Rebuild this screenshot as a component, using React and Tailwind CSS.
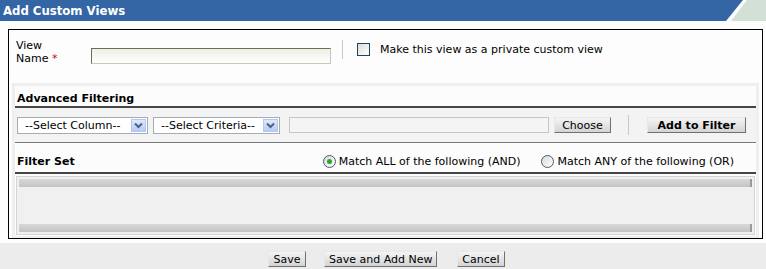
import React from 'react';

const font = { fontFamily: '"DejaVu Sans", Verdana, sans-serif' };

const Btn = ({ children, bold, className = '' }) => (
    <button
        type="button"
        className={`h-[16px] px-[4px] whitespace-nowrap text-[11px] leading-none text-black bg-gradient-to-b from-[#f4f4f4] to-[#d4d4d4] border border-t-[#e8e8e8] border-l-[#e8e8e8] border-r-[#707070] border-b-[#707070] ${bold ? 'font-bold' : ''} ${className}`}
    >
        {children}
    </button>
);

const Select = ({ label, width }) => (
    <div className={`flex items-center justify-between h-[17px] border border-[#a5acb2] bg-white pl-[7px] pr-[1px] ${width}`}>
        <span className="text-[11px] leading-none text-black">{label}</span>
        <span className="flex items-center justify-center w-[15px] h-[13px] bg-gradient-to-b from-[#dfe8fb] to-[#b7cbf3] border border-[#b3c7f0]">
            <svg width="9" height="7" viewBox="0 0 9 7">
                <path d="M1 1.5 L4.5 5 L8 1.5" fill="none" stroke="#4d6185" strokeWidth="2" />
            </svg>
        </span>
    </div>
);

const Radio = ({ checked }) => (
    <span className="flex items-center justify-center w-[13px] h-[13px] rounded-full border border-[#4a5a6a] bg-gradient-to-br from-[#d8d8d8] to-white">
        {checked && <span className="w-[5px] h-[5px] rounded-full bg-[#2fa32f]" />}
    </span>
);

export default function App() {
    return (
        <div className="w-[766px] h-[269px] bg-[#fcfdfc] flex flex-col" style={font}>
            {/* Title bar */}
            <div className="flex h-[21px] shrink-0">
                <div className="flex-1 bg-[#3465a5] flex items-center pl-[3px]">
                    <span
                        className="text-white text-[13px] font-bold leading-none"
                        style={{ fontFamily: '"DejaVu Sans Condensed", "DejaVu Sans", sans-serif' }}
                    >
                        Add Custom Views
                    </span>
                </div>
                <svg width="46" height="21" viewBox="0 0 46 21" className="shrink-0">
                    <polygon points="0,0 23,0 6,21 0,21" fill="#3465a5" />
                    <polygon points="27,0 46,0 46,21 11,21" fill="#d3e0d5" />
                </svg>
            </div>

            {/* Main box */}
            <div className="mt-[8px] ml-[8px] w-[755px] h-[210px] shrink-0 border border-black flex flex-col">
                {/* View name row */}
                <div className="flex h-[53px] pt-[9px]">
                    <div className="w-[82px] pl-[7px] text-[11px] leading-[13px] text-black">
                        <div>View</div>
                        <div>
                            Name <span className="text-[#b01010]">*</span>
                        </div>
                    </div>
                    <div className="w-[240px] h-[16px] mt-[9px] border border-t-[#6b6e50] border-l-[#6b6e50] border-r-[#c8c8b8] border-b-[#c8c8b8] bg-gradient-to-b from-[#efefe8] to-white" />
                    <div className="w-px h-[19px] bg-[#c8c8c8] ml-[11px] mt-[1px]" />
                    <div className="flex items-start ml-[14px] mt-[4px] gap-[10px]">
                        <span className="w-[13px] h-[13px] border border-[#1c4466] bg-gradient-to-br from-[#dcdcd6] to-white" />
                        <span className="text-[11px] leading-[13px] text-black">Make this view as a private custom view</span>
                    </div>
                </div>

                {/* Filtering panel */}
                <div className="mx-[3px] flex-1 border-[3px] border-[#efefef] border-b-[2px] bg-[#fcfcfc] flex flex-col">
                    {/* Advanced filtering */}
                    <div className="h-[22px] flex items-end pl-[2px] pb-[2px] border-b-2 border-[#454545]">
                        <span className="text-[11px] font-bold leading-none text-black">Advanced Filtering</span>
                    </div>
                    <div className="h-[35px] bg-[#f3f3f3] flex items-center pl-[2px] pr-[8px] border-b border-[#7a7a7a]">
                        <Select label="--Select Column--" width="w-[131px]" />
                        <Select label="--Select Criteria--" width="w-[127px] ml-[5px]" />
                        <div className="w-[260px] h-[16px] ml-[9px] border border-[#c6c6c6] bg-[#f4f4f4]" />
                        <Btn className="ml-[5px] w-[57px]">Choose</Btn>
                        <div className="w-px h-[20px] bg-[#c8c8c8] ml-[17px]" />
                        <Btn bold className="ml-[18px] w-[99px]">Add to Filter</Btn>
                    </div>

                    {/* Filter set */}
                    <div className="h-[31px] flex items-end justify-between pl-[2px] pb-[4px] pr-[22px] border-b-2 border-[#454545]">
                        <span className="text-[11px] font-bold leading-none text-black pb-[1px]">Filter Set</span>
                        <div className="flex items-center text-[11px] leading-none text-black">
                            <Radio checked />
                            <span className="ml-[3px]">Match ALL of the following (AND)</span>
                            <span className="ml-[21px]"><Radio /></span>
                            <span className="ml-[3px]">Match ANY of the following (OR)</span>
                        </div>
                    </div>
                    <div className="flex-1 bg-[#fcfcfc] pt-[2px] px-[1px] pb-[1px]">
                        <div className="h-full border border-[#d4d4d4] bg-[#f0f0f0] flex flex-col justify-between p-[2px]">
                            <div className="h-[8px] bg-gradient-to-b from-[#d8d8d8] to-[#c4c4c4] border-r-2 border-[#9a9a9a]" />
                            <div className="h-[8px] bg-gradient-to-b from-[#d8d8d8] to-[#c4c4c4] border-r-2 border-[#9a9a9a]" />
                        </div>
                    </div>
                </div>
            </div>

            {/* Footer */}
            <div className="mt-[4px] flex-1 bg-[#ececec] flex items-start justify-center pt-[8px] pl-[7px]">
                <Btn className="w-[38px]">Save</Btn>
                <Btn className="w-[113px] ml-[18px]">Save and Add New</Btn>
                <Btn className="w-[48px] ml-[20px]">Cancel</Btn>
            </div>
        </div>
    );
}
